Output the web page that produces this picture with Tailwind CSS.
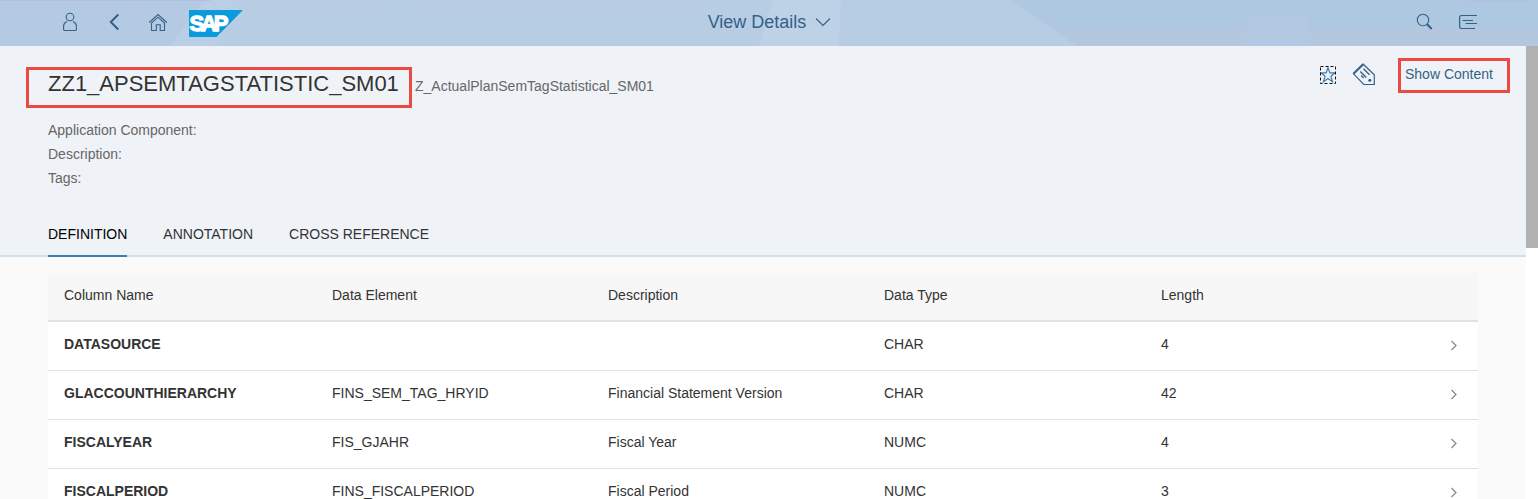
<!DOCTYPE html>
<html lang="en">
<head>
<meta charset="utf-8">
<title>View Details</title>
<script src="https://cdn.jsdelivr.net/npm/@tailwindcss/browser@4"></script>
</head>
<body class="h-[499px] overflow-hidden bg-white font-['Liberation_Sans',Arial,sans-serif] text-sm text-[#333]">
<header class="relative grid h-[46px] grid-cols-[1fr_auto_1fr] items-center overflow-hidden bg-[#b7cde4] text-[#346187]">
  <svg class="absolute inset-0" width="1538" height="46" fill="none">
    <path d="M1011 0H1538V46H1077Z" fill="#aec8e2"/>
    <path d="M1053 28H1538V46H1077Z" fill="#b3c8df"/>
    <path d="M1247 17h60v29h-60z" fill="#b2c8e3"/>
    <path d="M0 0h205L170 46H0Z" fill="#b4cae2"/>
    <path d="M205 0h38l-30 46h-43z" fill="#bacfe5"/>
    <path d="M773 0h68l-2 46H759Z" fill="#bdd1e7"/>
    <path d="M0 .5h210M1467 .5h64" stroke="#b4bde4"/>
    <path d="M250 .5h129M406 .5h293" stroke="#c1cddd"/>
  </svg>
  <div class="relative flex h-full items-center">
    <svg class="ml-[62px]" width="16" height="46" fill="none" stroke="currentColor" stroke-width="1.1"><circle cx="8" cy="17" r="3.8"/><path d="M5 21.6C2.800 22.600 1.600 24 1.600 26V29.200Q1.600 30.500 2.900 30.500H13.100Q14.400 30.500 14.400 29.200V26C14.400 24 13.200 22.600 11 21.600"/></svg>
    <svg class="ml-[30px]" width="12" height="46" fill="none" stroke="currentColor" stroke-width="2"><path d="M10.300 14.500 2.800 22l7.500 7.500"/></svg>
    <svg class="ml-[28px]" width="20" height="46" fill="none" stroke="currentColor" stroke-width="1.100"><path d="M1.200 22.500 10 14.500l8.800 8M3.500 24v-1l6.500-5.800 6.500 5.800v7.500h-4.300v-5.800H8.300v5.800H3.500V23"/></svg>
    <svg class="ml-[20px]" width="56" height="46"><path d="M1 10h54L28.500 37H1Z" fill="#0a9bdc"/><text x="1.500" y="31.300" fill="#fff" stroke="#fff" stroke-width="1.300" font-family="Liberation Sans" font-weight="700" font-size="22" textLength="39" lengthAdjust="spacing">SAP</text></svg>
  </div>
  <div class="relative flex items-center gap-[9px] pb-0.5 pl-px"><h1 class="text-[18px] leading-6">View Details</h1><svg width="16" height="10" fill="none" stroke="currentColor" stroke-width="1.100"><path d="m1 1.500 7 7 7-7"/></svg></div>
  <div class="relative flex items-center justify-end gap-[25px] pr-[60px]">
    <svg width="18" height="46" fill="none" stroke="currentColor"><circle cx="8" cy="20" r="5.700" stroke-width="1.100"/><path d="m12 24 4.700 5" stroke-width="2"/></svg>
    <svg width="20" height="46" fill="none" stroke="currentColor" stroke-width="1.200"><path d="M19 15.500H3.500Q1.600 15.500 1.600 17.400V26.600Q1.600 28.500 3.500 28.500H17M4.500 20.500H15M7.500 23.500H19"/></svg>
  </div>
</header>
<div class="flex h-[453px]">
  <main class="w-[1526px] bg-[#fafafa]">
    <section class="flex h-[211px] flex-col border-b-2 border-[#cfe0ee] bg-[#eff3f8]">
      <div class="flex h-[62px] items-start pl-[26px]">
        <div class="mt-[21px] h-[41px] w-[386px] border-3 border-[#e94b43] pl-[19px]"><h2 class="whitespace-nowrap text-[22px] leading-[27px]">ZZ1_APSEMTAGSTATISTIC_SM01</h2></div>
        <span class="ml-[3px] mt-[30px] leading-5 text-[#666]">Z_ActualPlanSemTagStatistical_SM01</span>
        <svg class="ml-auto mt-[20px] mr-[16px]" width="16" height="18" fill="none"><path d="m8 1.800 1.900 5h5l-4 3.400 1.600 5.500L8 12.500l-4.500 3.200 1.600-5.500-4-3.400h5Z" stroke="#427cac" stroke-width="1.200"/><path d="M.5.500h15v17H.5Z" stroke="#111" stroke-dasharray="3 2"/></svg>
        <svg class="mt-[16px] mr-[22px]" width="24" height="24" fill="none" stroke="#346187" stroke-width="1.200"><path d="M1.500 11.800 11.200 2.200 22.300 12.700v9.800H11.800Z"/><path d="M1.500 11.800 11.200 2.200" stroke-width="2"/><path d="m8.300 9.500 6 6M11.500 6.800l6 6M9.200 13.500l2.500 2.500" stroke-width="1.400"/><circle cx="17.800" cy="18.300" r="1.500" fill="#346187" stroke="none"/></svg>
        <button class="mr-[16px] mt-[12px] h-[35px] w-[112px] border-3 border-[#e94b43] pl-1 pb-1 text-left text-[#346187]">Show Content</button>
      </div>
      <div class="mt-[10px] pl-12 leading-6 text-[#666]"><p>Application Component:</p><p>Description:</p><p>Tags:</p></div>
      <nav class="mt-auto -mb-0.5 flex gap-9 pl-12 leading-5"><a class="h-[33px] border-b-2 border-[#427cac] text-black">DEFINITION</a><a>ANNOTATION</a><a>CROSS REFERENCE</a></nav>
    </section>
    <table class="ml-12 mt-4 w-[1430px] table-fixed border-collapse text-left">
      <colgroup><col class="w-[284px]"><col class="w-[276px]"><col class="w-[276px]"><col class="w-[277px]"><col></colgroup>
      <thead><tr class="h-[48px] border-b-2 border-[#e2e2e2] bg-[#f7f7f7] *:pb-[3px]"><th class="pl-4 font-normal">Column Name</th><th class="font-normal">Data Element</th><th class="font-normal">Description</th><th class="font-normal">Data Type</th><th class="font-normal">Length</th></tr></thead>
      <tbody>
        <tr class="h-[49px] border-b border-[#e2e2e2] bg-white"><td class="pb-1 pl-4 font-bold">DATASOURCE</td><td></td><td></td><td class="pb-1">CHAR</td><td><div class="flex items-center justify-between pb-1 pr-5">4<svg class="mt-1" width="8" height="11" fill="none" stroke="#888" stroke-width="1.200"><path d="m1.500 1 4.500 4.500L1.500 10"/></svg></div></td></tr>
        <tr class="h-[49px] border-b border-[#e2e2e2] bg-white"><td class="pb-1 pl-4 font-bold">GLACCOUNTHIERARCHY</td><td class="pb-1">FINS_SEM_TAG_HRYID</td><td class="pb-1">Financial Statement Version</td><td class="pb-1">CHAR</td><td><div class="flex items-center justify-between pb-1 pr-5">42<svg class="mt-1" width="8" height="11" fill="none" stroke="#888" stroke-width="1.200"><path d="m1.500 1 4.500 4.500L1.500 10"/></svg></div></td></tr>
        <tr class="h-[49px] border-b border-[#e2e2e2] bg-white"><td class="pb-1 pl-4 font-bold">FISCALYEAR</td><td class="pb-1">FIS_GJAHR</td><td class="pb-1">Fiscal Year</td><td class="pb-1">NUMC</td><td><div class="flex items-center justify-between pb-1 pr-5">4<svg class="mt-1" width="8" height="11" fill="none" stroke="#888" stroke-width="1.200"><path d="m1.500 1 4.500 4.500L1.500 10"/></svg></div></td></tr>
        <tr class="h-[49px] border-b border-[#e2e2e2] bg-white"><td class="pb-1 pl-4 font-bold">FISCALPERIOD</td><td class="pb-1">FINS_FISCALPERIOD</td><td class="pb-1">Fiscal Period</td><td class="pb-1">NUMC</td><td><div class="flex items-center justify-between pb-1 pr-5">3<svg class="mt-1" width="8" height="11" fill="none" stroke="#888" stroke-width="1.200"><path d="m1.500 1 4.500 4.500L1.500 10"/></svg></div></td></tr>
      </tbody>
    </table>
  </main>
  <aside class="w-3"><div class="h-[202px] bg-[#b1b1b1]"></div></aside>
</div>
</body>
</html>
